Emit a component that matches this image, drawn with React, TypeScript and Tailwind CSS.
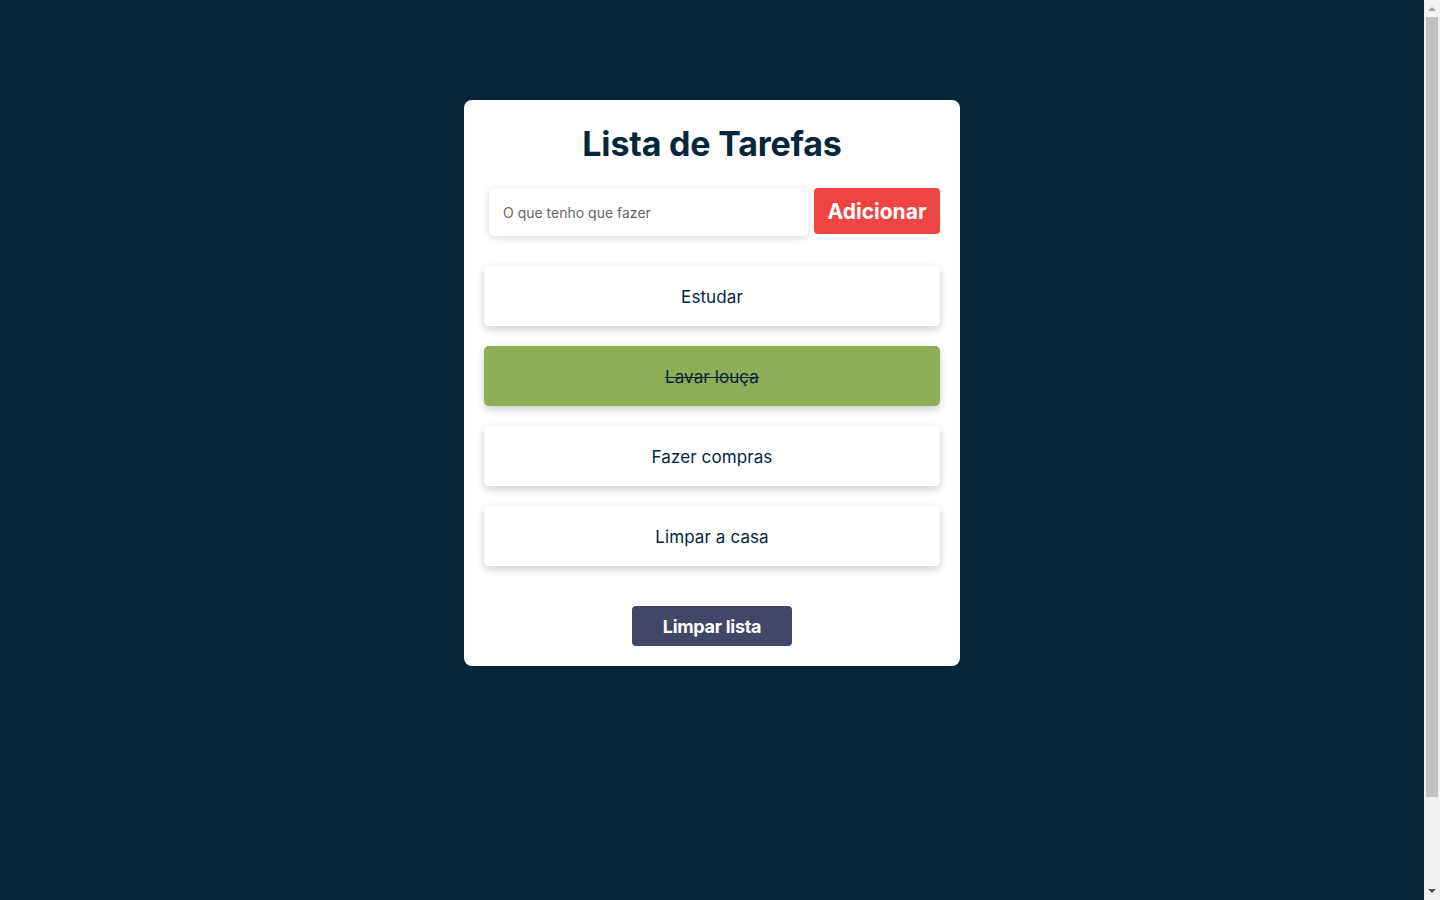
import React, { useState } from 'react';

type Task = { id: number; text: string; done: boolean };

const INITIAL_TASKS: Task[] = [
  { id: 1, text: 'Estudar', done: false },
  { id: 2, text: 'Lavar louça', done: true },
  { id: 3, text: 'Fazer compras', done: false },
  { id: 4, text: 'Limpar a casa', done: false },
];

const FONT = "font-['Inter','Noto_Sans',sans-serif]";

// Classic browser scrollbar drawn at the right edge, as in the screenshot
const ScrollbarStrip: React.FC = () => (
  <div className="flex h-full w-4 shrink-0 flex-col items-center bg-[#f1f1f1]">
    <div className="flex h-[17px] items-center justify-center">
      <svg width="8" height="5" viewBox="0 0 8 5">
        <path d="M0 5 L4 1 L8 5 Z" fill="#a3a3a3" />
      </svg>
    </div>
    <div className="h-[780px] w-[12px] bg-[#c1c1c1]" />
    <div className="flex-1" />
    <div className="flex h-[17px] items-center justify-center">
      <svg width="8" height="5" viewBox="0 0 8 5">
        <path d="M0 0 L8 0 L4 4 Z" fill="#505050" />
      </svg>
    </div>
  </div>
);

const App: React.FC = () => {
  const [tasks, setTasks] = useState<Task[]>(INITIAL_TASKS);
  const [draft, setDraft] = useState('');

  const addTask = () => {
    if (!draft.trim()) return;
    setTasks([...tasks, { id: Date.now(), text: draft.trim(), done: false }]);
    setDraft('');
  };

  const toggleTask = (id: number) => {
    setTasks(tasks.map((t) => (t.id === id ? { ...t, done: !t.done } : t)));
  };

  return (
    <div className={`flex h-screen w-full overflow-hidden bg-[#04263b] ${FONT}`}>
      <main className="flex-1 pt-[100px]">
        {/* Card */}
        <div className="mx-auto flex w-[496px] flex-col items-center rounded-lg bg-white px-5 pb-5 pt-[21px]">
          <h1 className="text-[34px] font-bold leading-[46px] tracking-[-0.2px] text-[#05263b]">
            Lista de Tarefas
          </h1>

          {/* Input row */}
          <div className="mt-[21px] flex w-full items-start gap-[5px] pl-[5px]">
            <input
              value={draft}
              onChange={(e) => setDraft(e.target.value)}
              placeholder="O que tenho que fazer"
              className="h-12 w-[320px] rounded-md bg-white px-[14px] text-[14px] text-[#333] shadow-[0_2px_8px_rgba(0,0,0,0.15)] outline-none placeholder:text-[#666]"
            />
            <button
              onClick={addTask}
              className="h-[46px] w-[126px] rounded-[4px] bg-[#ef4444] pt-[2px] text-[21px] font-bold text-white"
            >
              Adicionar
            </button>
          </div>

          {/* Task list */}
          <ul className="mt-[30px] flex w-full flex-col gap-5">
            {tasks.map((t) => (
              <li
                key={t.id}
                onClick={() => toggleTask(t.id)}
                className={`flex h-[60px] cursor-pointer items-center justify-center rounded-[5px] pt-[3px] text-[17px] tracking-[0.1px] text-[#05263b] shadow-[0_3px_8px_rgba(0,0,0,0.2)] ${
                  t.done ? 'bg-[#8fac56] line-through' : 'bg-white'
                }`}
              >
                {t.text}
              </li>
            ))}
          </ul>

          <button
            onClick={() => setTasks([])}
            className="mt-10 h-10 w-40 rounded-[4px] bg-[#434668] text-[18px] font-bold tracking-[-0.3px] text-white"
          >
            Limpar lista
          </button>
        </div>
      </main>
      <ScrollbarStrip />
    </div>
  );
};

export default App;
